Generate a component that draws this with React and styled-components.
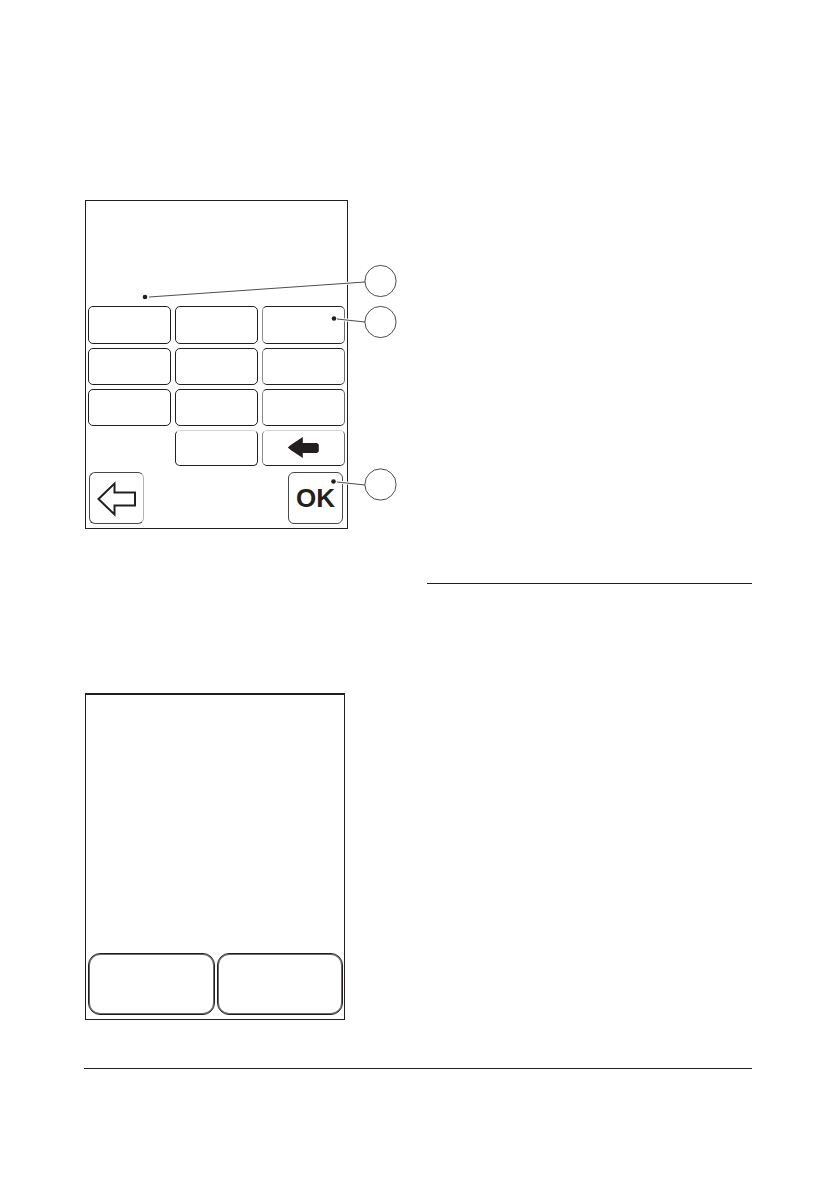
import { createGlobalStyle, styled } from "styled-components"

const keys = ["1", "2", "3", "4", "5", "6", "7", "8", "9", "0"]

const callouts = [
    {id: "entry", dot: [60, 97], line: [64, 97, 280, 82], circle: [295.5, 81]},
    {id: "key", dot: [249, 118.5], line: [252, 119, 280, 122], circle: [295.5, 122]},
    {id: "confirm", dot: [248.5, 281.5], line: [252, 282, 280, 285], circle: [295.5, 284.5]},
]

const Callouts = () => {
    return (<Overlay viewBox="0 0 320 330" aria-hidden="true">
        {callouts.map(({id, dot, line, circle}) => {
            const [x1, y1, x2, y2] = line
            return (<g key={id}>
                <line x1={x1} y1={y1} x2={x2} y2={y2} stroke="#fff" strokeWidth="3"/>
                <line x1={x1} y1={y1} x2={x2} y2={y2} stroke="#231f20" strokeWidth="0.8"/>
                <circle cx={dot[0]} cy={dot[1]} r="2.3" fill="#231f20"/>
                <circle cx={circle[0]} cy={circle[1]} r="15.6" fill="#fff" stroke="#231f20" strokeWidth="0.8"/>
            </g>)
        })}
    </Overlay>)
}

const KeypadScreen = () => {
    return (<Figure>
        <Screen>
            <Display/>
            <Keypad>
                {keys.map((key) => (
                    <Key key={key} type="button" aria-label={key} $last={key === "0"} $soft={Number(key) % 3 === 0 && key !== "0"}/>
                ))}
                <Key type="button" aria-label="Delete" $soft $faintTop>
                    <svg width="34" height="24" viewBox="0 0 34 24" fill="#231f20">
                        <path d="M.8 11.5 4 8.7 15.8 1v6H30l1.8 1.5v7L30 17H15.8v5L4 14.3z"/>
                    </svg>
                </Key>
            </Keypad>
            <Nav>
                <NavButton type="button" aria-label="Back" $faint>
                    <svg width="42" height="38" viewBox="0 0 42 38" fill="#fff" stroke="#231f20" strokeWidth="2">
                        <path d="M2.5 20 18.5 4.5v9H39v13H18.5v9z"/>
                    </svg>
                </NavButton>
                <NavButton type="button">OK</NavButton>
            </Nav>
        </Screen>
        <Callouts/>
    </Figure>)
}

const ChoiceScreen = () => {
    return (<Dialog>
        <Choices>
            <Choice type="button" aria-label="No"/>
            <Choice type="button" aria-label="Yes"/>
        </Choices>
    </Dialog>)
}

const App = () => {
    return (<>
        <GlobalStyle/>
        <Page>
            <KeypadScreen/>
            <SectionRule/>
            <ChoiceScreen/>
            <Rule/>
        </Page>
    </>)
}

const GlobalStyle = createGlobalStyle`
    *{
        box-sizing:border-box;
    }
    body{
        margin:0;
        background:#fff;
        color:#231f20;
        font-family:"Liberation Sans", Arial, sans-serif;
    }
    button{
        font:inherit;
        color:inherit;
        padding:0;
        cursor:pointer;
    }
    svg{
        display:block;
    }
`

const Page = styled.main`
    display:flex;
    flex-direction:column;
    align-items:flex-start;
    padding:200px 87px 122px 84px;
`

const Figure = styled.section`
    position:relative;
    margin-left:1px;
`

const Overlay = styled.svg`
    position:absolute;
    top:0;
    left:0;
    width:320px;
    height:330px;
    pointer-events:none;
`

const Screen = styled.div`
    width:263px;
    border:1px solid #231f20;
    padding:0 2px 4px;
`

const Display = styled.div`
    height:105px;
`

const Keypad = styled.div`
    display:grid;
    grid-template-columns:repeat(3, 1fr);
    grid-template-rows:38px 37px 37px 36px;
    gap:4px;
`

const Key = styled.button`
    display:grid;
    place-items:center;
    grid-column:${({$last}) => $last ? "2" : "auto"};
    background:#fff;
    border:1px solid #231f20;
    border-top-color:${({$last, $faintTop}) => $last || $faintTop ? "#d4d4d4" : "#231f20"};
    border-left-color:${({$soft}) => $soft ? "#8c8a8b" : "#231f20"};
    border-right-color:${({$soft}) => $soft ? "#6b696a" : "#231f20"};
    border-radius:5px;
`

const Nav = styled.div`
    display:flex;
    justify-content:space-between;
    margin-top:6px;
    padding:0 2px 0 1px;
`

const NavButton = styled.button`
    display:grid;
    place-items:center;
    width:55px;
    height:52px;
    background:#fff;
    border:1px solid #4a4748;
    border-right-color:${({$faint}) => $faint ? "#b5b4b4" : "#4a4748"};
    border-radius:6px;
    font-size:26px;
    font-weight:bold;
    line-height:30px;
`

const Rule = styled.hr`
    width:100%;
    height:1px;
    margin:48px 0 0;
    border:0;
    background:#231f20;
`

const SectionRule = styled(Rule)`
    width:calc(100% - 343px);
    margin:54px 0 109px;
    align-self:flex-end;
`

const Dialog = styled.section`
    display:flex;
    align-items:flex-end;
    width:260px;
    min-height:327px;
    margin-left:1px;
    border:1px solid #231f20;
    border-top-width:2px;
    padding:0 1px 4px 2px;
`

const Choices = styled.div`
    display:grid;
    grid-template-columns:1fr 1fr;
    gap:2px;
    width:100%;
`

const Choice = styled.button`
    height:62px;
    background:#fff;
    border:1px solid #231f20;
    border-radius:12px;
    box-shadow:inset 0 0 0 1px #6b696a;
`

export default App
